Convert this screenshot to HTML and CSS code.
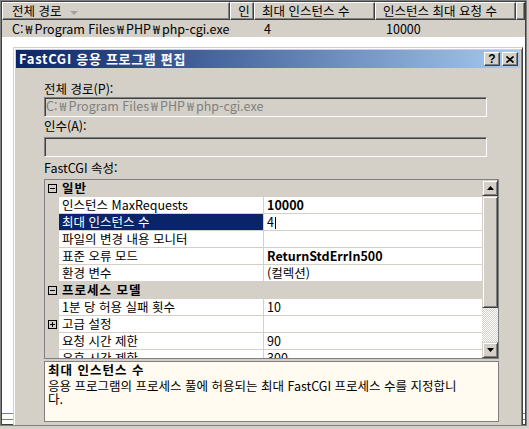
FILE: index.html
```html
<!DOCTYPE html>
<html lang="ko">
<head>
    <meta charset="UTF-8">
    <meta name="viewport" content="width=device-width, initial-scale=1.0">
    <title>FastCGI 응용 프로그램 편집</title>
    <link rel="stylesheet" href="styles.css">
</head>
<body>

<div class="screen">
    <div class="list">
        <div class="list-head">
            <div class="col col-path">전체 경로 <span class="sort-arrow"></span></div>
            <div class="col col-in">인</div>
            <div class="col col-max">최대 인스턴스 수</div>
            <div class="col col-req">인스턴스 최대 요청 수</div>
            <div class="col col-rest"></div>
        </div>
        <div class="list-row">
            <div class="cell col-path">C:<span class="won">₩</span>Program Files<span class="won">₩</span>PHP<span class="won">₩</span>php-cgi.exe</div>
            <div class="cell col-in"></div>
            <div class="cell col-max">4</div>
            <div class="cell col-req">10000</div>
        </div>
        <div class="list-fill"></div>
        <div class="list-foot"></div>
    </div>

    <!-- 편집 대화 상자 -->
    <div class="dialog">
        <div class="titlebar">
            <span class="title">FastCGI 응용 프로그램 편집</span>
            <span class="cap-btn cap-help">?</span>
            <span class="cap-btn cap-close">
                <svg width="8" height="7" viewBox="0 0 8 7"><path d="M0.5 0.5L7.5 6.5M7.5 0.5L0.5 6.5" stroke="#000" stroke-width="1.7"/></svg>
            </span>
        </div>

        <div class="dlg-body">
            <label class="field-label">전체 경로(P):</label>
            <div class="textbox">C:<span class="won">₩</span>Program Files<span class="won">₩</span>PHP<span class="won">₩</span>php-cgi.exe</div>

            <label class="field-label lbl-args">인수(A):</label>
            <div class="textbox tb-args"></div>

            <label class="field-label lbl-props">FastCGI 속성:</label>
            <div class="propgrid">
                <div class="pg-rows">
                    <div class="pg-row pg-cat">
                        <div class="pg-margin"><svg width="9" height="9"><rect x="0.5" y="0.5" width="8" height="8" fill="none" stroke="#000"/><path d="M2 4.5h5" stroke="#000"/></svg></div>
                        <div class="pg-name">일반</div>
                        <div class="pg-value"></div>
                    </div>
                    <div class="pg-row">
                        <div class="pg-margin"></div>
                        <div class="pg-name">인스턴스 MaxRequests</div>
                        <div class="pg-value bold">10000</div>
                    </div>
                    <div class="pg-row pg-sel">
                        <div class="pg-margin"></div>
                        <div class="pg-name">최대 인스턴스 수</div>
                        <div class="pg-value">4<span class="caret"></span></div>
                    </div>
                    <div class="pg-row">
                        <div class="pg-margin"></div>
                        <div class="pg-name">파일의 변경 내용 모니터</div>
                        <div class="pg-value"></div>
                    </div>
                    <div class="pg-row">
                        <div class="pg-margin"></div>
                        <div class="pg-name">표준 오류 모드</div>
                        <div class="pg-value bold">ReturnStdErrIn500</div>
                    </div>
                    <div class="pg-row">
                        <div class="pg-margin"></div>
                        <div class="pg-name">환경 변수</div>
                        <div class="pg-value">(컬렉션)</div>
                    </div>
                    <div class="pg-row pg-cat">
                        <div class="pg-margin"><svg width="9" height="9"><rect x="0.5" y="0.5" width="8" height="8" fill="none" stroke="#000"/><path d="M2 4.5h5" stroke="#000"/></svg></div>
                        <div class="pg-name">프로세스 모델</div>
                        <div class="pg-value"></div>
                    </div>
                    <div class="pg-row">
                        <div class="pg-margin"></div>
                        <div class="pg-name">1분 당 허용 실패 횟수</div>
                        <div class="pg-value">10</div>
                    </div>
                    <div class="pg-row">
                        <div class="pg-margin"><svg width="9" height="9"><rect x="0.5" y="0.5" width="8" height="8" fill="none" stroke="#000"/><path d="M2 4.5h5M4.5 2v5" stroke="#000"/></svg></div>
                        <div class="pg-name">고급 설정</div>
                        <div class="pg-value"></div>
                    </div>
                    <div class="pg-row">
                        <div class="pg-margin"></div>
                        <div class="pg-name">요청 시간 제한</div>
                        <div class="pg-value">90</div>
                    </div>
                    <div class="pg-row">
                        <div class="pg-margin"></div>
                        <div class="pg-name">유휴 시간 제한</div>
                        <div class="pg-value">300</div>
                    </div>
                </div>
                <div class="pg-scroll">
                    <div class="raised sb-btn"><svg width="7" height="4"><path d="M3.5 0L7 4H0z"/></svg></div>
                    <div class="raised sb-thumb"></div>
                    <div class="sb-track"></div>
                    <div class="raised sb-btn"><svg width="7" height="4"><path d="M0 0H7L3.5 4z"/></svg></div>
                </div>
            </div>

            <div class="desc">
                <div class="desc-title">최대 인스턴스 수</div>
                <div class="desc-text">응용 프로그램의 프로세스 풀에 허용되는 최대 FastCGI 프로세스 수를 지정합니<br>다.</div>
            </div>
        </div>
    </div>
</div>

</body>
</html>
```

FILE: styles.css
```css
* {
    box-sizing: border-box;
}
body {
    margin: 0;
    background: #d4d0c8;
    font: 12.5px/14px "Noto Sans CJK KR", sans-serif;
    color: #000;
}
.screen {
    position: relative;
    width: 527px;
    height: 426px;
    border: 1px solid #808080;
    overflow: hidden;
}
.list {
    height: 100%;
    border: 1px solid #404040;
    background: #fff;
    display: flex;
    flex-direction: column;
}

/* 목록 머리글 */
.list-head {
    display: flex;
    height: 18px;
    background: #d4d0c8;
    flex: none;
}
.list-head .col {
    border: 1px solid;
    border-color: #fff #404040 #404040 #fff;
    box-shadow: inset -1px -1px #808080;
    padding-left: 7px;
    line-height: 15px;
    white-space: nowrap;
    overflow: hidden;
}
.col-path { width: 230px; }
.col-in { width: 24px; }
.col-max { width: 122px; }
.col-req { width: 142px; }
.col-rest { flex: 1; }
.list-head .col-path { padding-left: 9px; }
.sort-arrow {
    display: inline-block;
    width: 0;
    height: 0;
    margin-left: 5px;
    border-left: 4px solid transparent;
    border-right: 4px solid transparent;
    border-top: 4px solid #a0a0a0;
    vertical-align: middle;
}
.list-row {
    display: flex;
    height: 17px;
    background: #d4d0c8;
    line-height: 17px;
    flex: none;
}
.list-row .cell {
    padding-left: 8px;
    white-space: nowrap;
}
.list-row .col-path { padding-left: 10px; }
.won {
    display: inline-block;
    width: 11px;
    text-align: center;
}
.list-fill { flex: 1; }
.list-foot {
    height: 7px;
    margin-bottom: 4px;
    border-top: 1px solid #6b7fae;
    border-bottom: 1px solid #6b7fae;
}

/* 대화 상자 */
.dialog {
    position: absolute;
    left: 12px;
    top: 46px;
    width: 510px;
    height: 400px;
    background: #d4d0c8;
    border: 1px solid;
    border-color: #d4d0c8 #404040 #404040 #d4d0c8;
    box-shadow: inset 1px 1px #fff, inset -1px -1px #808080;
    padding: 2px;
}
.titlebar {
    display: flex;
    align-items: center;
    height: 18px;
    padding: 0 2px 0 3px;
    background: linear-gradient(to right, #0a246a, #a6caf0);
    color: #fff;
    font-weight: bold;
}
.title {
    flex: 1;
    font-size: 13px;
    letter-spacing: 0.7px;
}
.cap-btn {
    width: 16px;
    height: 14px;
    display: flex;
    align-items: center;
    justify-content: center;
    background: #d4d0c8;
    border: 1px solid;
    border-color: #fff #404040 #404040 #fff;
    box-shadow: inset -1px -1px #808080;
    color: #000;
    font: bold 12px/12px "Liberation Sans", sans-serif;
}
.cap-close { margin-left: 2px; }

.dlg-body {
    padding: 14px 0 0 28px;
}
.field-label {
    display: block;
    line-height: 14px;
}
.lbl-args { margin-top: 2px; }
.lbl-props { margin-top: 4px; }
.textbox {
    width: 443px;
    height: 20px;
    margin-top: 1px;
    padding: 1px 1px 0;
    border: 1px solid;
    border-color: #808080 #fff #fff #808080;
    box-shadow: inset 1px 1px #404040, inset -1px -1px #d4d0c8;
    color: #808080;
    line-height: 14px;
    white-space: nowrap;
}
.tb-args { margin-top: 4px; }

/* 속성 표 */
.propgrid {
    display: flex;
    width: 455px;
    height: 180px;
    margin-top: 4px;
    border: 1px solid #808080;
    background: #fff;
}
.pg-rows {
    flex: 1;
    overflow: hidden;
}
.pg-row {
    display: flex;
    height: 17px;
}
.pg-margin {
    width: 14px;
    flex: none;
    background: #d4d0c8;
    display: flex;
    align-items: center;
    justify-content: center;
}
.pg-name {
    width: 204px;
    flex: none;
    padding-left: 3px;
    border-bottom: 1px solid #d4d0c8;
    line-height: 16px;
    white-space: nowrap;
}
.pg-value {
    flex: 1;
    padding-left: 3px;
    border-left: 1px solid #d4d0c8;
    border-bottom: 1px solid #d4d0c8;
    line-height: 16px;
    white-space: nowrap;
}
.pg-cat {
    background: #d4d0c8;
    font-weight: bold;
    letter-spacing: 1px;
}
.pg-sel .pg-name {
    background: #0a246a;
    color: #fff;
}
.bold { font-weight: bold; }
.caret {
    display: inline-block;
    width: 1px;
    height: 12px;
    margin-left: 1px;
    background: #000;
    vertical-align: -2px;
}
.pg-scroll {
    width: 16px;
    flex: none;
    display: flex;
    flex-direction: column;
}
.raised {
    background: #d4d0c8;
    border: 1px solid;
    border-color: #d4d0c8 #404040 #404040 #d4d0c8;
    box-shadow: inset 1px 1px #fff, inset -1px -1px #808080;
}
.sb-btn {
    height: 16px;
    display: flex;
    align-items: center;
    justify-content: center;
}
.sb-thumb { height: 112px; }
.sb-track {
    flex: 1;
    background: repeating-conic-gradient(#d4d0c8 0% 25%, #fff 0% 50%) 0 0 / 2px 2px;
}

/* 설명 */
.desc {
    width: 455px;
    height: 61px;
    margin-top: 2px;
    padding: 1px 3px;
    border: 1px solid #808080;
    background: #fffbf0;
}
.desc-title {
    font-weight: bold;
    line-height: 13px;
    letter-spacing: 1px;
}
.desc-text {
    margin-top: 3px;
    line-height: 13px;
}
```
